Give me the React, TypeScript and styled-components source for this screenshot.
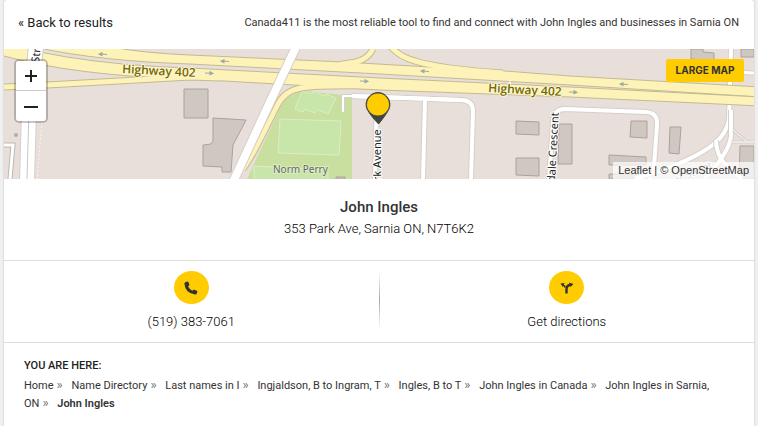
import React from "react";
import styled, { createGlobalStyle } from "styled-components";

const GlobalStyle = createGlobalStyle`
  * { box-sizing: border-box; }
  body {
    margin: 0;
    background: #f0f0f0;
    color: #333;
    font-family: Roboto, "Liberation Sans", sans-serif;
  }
`;

const Card = styled.main`
  margin: 0 4px;
  min-height: 100vh;
  background: #fff;
  border-radius: 3px 3px 0 0;
  box-shadow: 0 0 2px rgba(0, 0, 0, 0.25);
`;

const TopBar = styled.header`
  display: flex;
  align-items: center;
  justify-content: space-between;
  padding: 11px 15px 14px 14px;
  line-height: 24px;
`;

const BackLink = styled.a`
  color: #222;
  font-size: 13px;
  text-decoration: none;
`;

const Tagline = styled.p`
  margin: 0;
  font-size: 11px;
  line-height: 20px;
`;

const MapPanel = styled.section`
  position: relative;
  height: 130px;
  overflow: hidden;
  background: #e8dfda;
`;

const MapDrawing = styled.svg`
  display: block;
  width: 100%;
  height: 100%;
`;

const ZoomControl = styled.div`
  position: absolute;
  top: 10px;
  left: 10px;
  display: flex;
  flex-direction: column;
  border: 2px solid rgba(0, 0, 0, 0.22);
  border-radius: 5px;
  background-clip: padding-box;
`;

const ZoomButton = styled.button<{ $first?: boolean }>`
  display: grid;
  place-items: center;
  width: 30px;
  height: 30px;
  padding: 0;
  border: 0;
  border-bottom: ${(p) => (p.$first ? "1px solid #ccc" : "0")};
  border-radius: ${(p) => (p.$first ? "3px 3px 0 0" : "0 0 3px 3px")};
  background: #fff;
  color: #222;
`;

const LargeMapButton = styled.button`
  position: absolute;
  top: 10px;
  right: 10px;
  width: 78px;
  height: 23px;
  padding: 0 0 2px;
  border: 0;
  border-radius: 2px;
  background: #fc0;
  color: #333;
  font-family: Inter, sans-serif;
  font-size: 10px;
  font-weight: 700;
`;

const Attribution = styled.div`
  position: absolute;
  right: 0;
  bottom: 0;
  padding: 0 5px;
  background: rgba(255, 255, 255, 0.7);
  color: #333;
  font-family: "Liberation Sans", sans-serif;
  font-size: 11px;
  line-height: 17px;

  a { color: inherit; text-decoration: none; }
`;

const Person = styled.section`
  padding: 17px 16px 21px;
  text-align: center;
`;

const Name = styled.h1`
  margin: 0;
  font-size: 15px;
  font-weight: 500;
  line-height: 22px;
`;

const Address = styled.p`
  margin: 0;
  color: #000;
  font-size: 13px;
  font-weight: 300;
  line-height: 21px;
`;

const Actions = styled.nav`
  display: grid;
  grid-template-columns: 1fr 1px 1fr;
  border: solid #ddd;
  border-width: 1px 0;
`;

const Divider = styled.span`
  margin: 10px 0 12px;
  background: linear-gradient(#fff, #aaa, #fff);
`;

const Action = styled.a`
  display: flex;
  flex-direction: column;
  align-items: center;
  gap: 8px;
  padding: 10px 0 11px;
  color: #000;
  font-size: 13px;
  font-weight: 300;
  line-height: 19px;
  text-decoration: none;
`;

const Disc = styled.span`
  display: grid;
  place-items: center;
  width: 35px;
  height: 33px;
  border-radius: 50%;
  background: #fc0;
`;

const Crumbs = styled.nav`
  padding: 14px 20px 12px;
  font-size: 11px;
  line-height: 18px;
`;

const CrumbsTitle = styled.h2`
  margin: 0 0 2px;
  font-size: 11px;
  font-weight: 500;
  line-height: 18px;
  color: #222;
`;

const CrumbLink = styled.a`
  color: #333;
  text-decoration: none;
`;

const Separator = styled.span`
  margin: 0 6px 0 3px;
  color: #777;
  font-size: 13px;
  line-height: 1;
`;

const Current = styled.span`
  font-weight: 600;
`;

const crumbs = [
  "Home",
  "Name Directory",
  "Last names in I",
  "Ingjaldson, B to Ingram, T",
  "Ingles, B to T",
  "John Ingles in Canada",
  "John Ingles in Sarnia, ON",
];

const Road = ({ d, w, fill = "#fff", edge = "#d5cfcb" }: { d: string; w: number; fill?: string; edge?: string }) => (
  <g fill="none" strokeLinejoin="round">
    <path d={d} stroke={edge} strokeWidth={w + 2} />
    <path d={d} stroke={fill} strokeWidth={w} />
  </g>
);

const Arrow = ({ x, y, back }: { x: number; y: number; back?: boolean }) => (
  <path
    d={back ? "M8 0H1M3-1.500L0 0L3 1.500Z" : "M0 0H7M5-1.500L8 0L5 1.500Z"}
    transform={`translate(${x} ${y}) rotate(3)`}
    stroke="#9aabaa"
    fill="#8ba0a0"
    strokeWidth="1"
  />
);

const StreetMap = () => (
  <MapDrawing viewBox="4 49 750 130" preserveAspectRatio="xMidYMid slice" role="img" aria-label="Map around 353 Park Ave">
    <rect x="4" y="49" width="750" height="130" fill="#e8dfda" />
    <path d="M247 179L280 108Q288 92 306 91L352 96V179Z" fill="#c9dfa0" />
    <g fill="#c8e6aa" stroke="#d9efc4">
      <path d="M302 91L312 94L314 91L324 96L326 94L336 98L328 114L318 110L315 113L305 109L303 112L295 109Z" />
      <path d="M280 119L341 121L339 155L278 153Z" />
      <path d="M254 179V166L328 170V179" />
    </g>
    <g fill="#cfc7c1" stroke="#aca29c">
      <path d="M184 89H208V118H184ZM213 118L246 120L233 145L231 172H222V167L203 166V145L211 144L213 141Z" />
      <path d="M516 121L539 122V135L516 134ZM516 158L539 158V176L516 175Z" />
      <path d="M559 124H572V164H558ZM631 121H647V138L630 137ZM670 127H681L679 154L669 153ZM609 155L646 157V165H609ZM609 174H646V179H609ZM691 49H703V52L714 53V61L691 59ZM741 49H754V57H741ZM740 146H754V179H739Z" />
      <path d="M336 177H345V179H336Z" />
    </g>
    <path d="M4 145H13L10 179" fill="none" stroke="#bdb7b3" strokeWidth="5" />
    <path d="M4 145H13L10 179" fill="none" stroke="#fff" strokeWidth="3" />
    <path d="M42 122L37 179" stroke="#f7f2ee" strokeDasharray="2 2" />
    <circle cx="16" cy="135" r="2" fill="#b5aba5" />

    <Road d="M343 112V96H355" w={2} />
    <Road d="M352 96L460 100Q473 100 473 111L471 179" w={4} />
    <Road d="M425 99L423 179M377 98L375 179" w={4} />
    <path d="M352 96L460 100" stroke="#fff" strokeWidth="4" fill="none" />
    <Road d="M549 179L553 123Q553 109 565 109L646 112Q658 113 657 125L654 166L650 179" w={4} />
    <Road d="M731 49L729 120Q726 134 715 143Q700 156 665 169L635 179" w={4} />
    <Road d="M731 110V136Q730 148 715 167L704 179M716 140Q716 154 725 164L742 179" w={4} />
    <Road d="M731 72L754 73" w={3} />
    <Road d="M733 130L746 141M731 142H754" w={1} />

    <g stroke="#c3bb90" strokeWidth="7" fill="none">
      <path d="M373 49Q368 59 356 62L343 64L333 67" />
      <path d="M391 47Q400 57 415 61Q442 69 503 73" />
      <path d="M243 169Q252 156 260 140L277 106Q284 91 301 88Q318 85 380 86" />
      <path d="M4 87L47 85L190 77L220 78" />
    </g>
    <g fill="#fdf2b8" stroke="#c3bb90">
      <path d="M39 48L117 48Q145 53 190 55L343 62L447 68L505 71L570 76L760 87V97L570 85L380 74L190 64Q100 61 39 48Z" />
      <path d="M0 48H24Q60 58 123 64Q155 67 190 68L380 78L570 87L760 97V106L570 97L380 90L190 79Q75 76 0 55Z" />
    </g>
    <g stroke="#fdf2b8" strokeWidth="5" fill="none">
      <path d="M373 49Q368 59 356 62L343 64L333 67" />
      <path d="M391 47Q400 57 415 61Q442 69 503 73" />
      <path d="M243 169Q252 156 260 140L277 106Q284 91 301 88Q318 85 380 86" />
      <path d="M4 87L47 85L190 77L220 78" />
    </g>

    <Road d="M297 45L270 102L233 182" w={8} />
    <Road d="M36 47L29 110L27 182" w={14} />
    <path d="M36 49L29 110L27 179" stroke="#c8c8cc" fill="none" />
    <path d="M510 80V88" stroke="#fff" />
    <Arrow x={99} y={54} back />
    <Arrow x={221} y={61} back />
    <Arrow x={205} y={73} />
    <Arrow x={360} y={81} />
    <Arrow x={421} y={71} back />
    <Arrow x={620} y={84} back />
    <Arrow x={569} y={92} />

    <g fontFamily="Noto Sans, sans-serif" fontSize="12" stroke="#fff" strokeWidth="2" strokeLinejoin="round" paintOrder="stroke" fill="#222">
      <g fontFamily="Open Sans, sans-serif" fontWeight="600" fill="#736900" stroke="#fef6d5">
        <text x="122" y="73" transform="rotate(3 122 73)">Highway 402</text>
        <text x="488" y="92" transform="rotate(3 488 92)">Highway 402</text>
      </g>
      <text x="273" y="173" fontSize="10" fill="#666" stroke="#dcedc5">Norm Perry</text>
      <text transform="translate(381 194) rotate(-90)" fontSize="11">Park Avenue</text>
      <text transform="translate(554 202) rotate(-87)" fontSize="11">Kendale Crescent</text>
      <text transform="translate(39 63) rotate(-84)" fontSize="11">Street</text>
      <text transform="translate(676 184) rotate(-24)" fontSize="10" fill="#888">er Street</text>
    </g>

    <path d="M378 92.500A12 12 0 0 0 367 109Q370 115 378.500 124Q386 115 389 109A12 12 0 0 0 378 92.500Z" fill="#444" stroke="#444" />
    <circle cx="378" cy="104.500" r="11" fill="#fc0" />
  </MapDrawing>
);

export default function App() {
  return (
    <>
      <GlobalStyle />
      <Card>
        <TopBar>
          <BackLink href="#results">« Back to results</BackLink>
          <Tagline>Canada411 is the most reliable tool to find and connect with John Ingles and businesses in Sarnia ON</Tagline>
        </TopBar>

        <MapPanel>
          <StreetMap />
          <ZoomControl>
            <ZoomButton $first aria-label="Zoom in">
              <svg width="14" height="14" viewBox="0 0 14 14" stroke="currentColor" strokeWidth="2"><path d="M1 7H13M7 1V13" /></svg>
            </ZoomButton>
            <ZoomButton aria-label="Zoom out">
              <svg width="14" height="14" viewBox="0 0 14 14" stroke="currentColor" strokeWidth="2"><path d="M0 8H14" /></svg>
            </ZoomButton>
          </ZoomControl>
          <LargeMapButton>LARGE MAP</LargeMapButton>
          <Attribution>
            <a href="#leaflet">Leaflet</a> | © <a href="#osm">OpenStreetMap</a>
          </Attribution>
        </MapPanel>

        <Person>
          <Name>John Ingles</Name>
          <Address>353 Park Ave, Sarnia ON, N7T6K2</Address>
        </Person>

        <Actions aria-label="Contact">
          <Action href="tel:5193837061">
            <Disc>
              <svg width="14" height="14" viewBox="0 0 14 14" fill="#333">
                <path d="M1 1.500L3 .5Q4 .2 4.500 1.200L5.300 3.500Q5.500 4.300 4.900 4.700L4.100 5.400Q5.500 8.300 8.300 9.800L9.200 9Q9.700 8.500 10.400 8.800L12.800 9.800Q13.700 10.300 13.300 11.200L12.500 12.900Q12 13.600 11 13.500Q1.300 12.200.4 2.700Q.3 1.900 1 1.500Z" />
              </svg>
            </Disc>
            (519) 383-7061
          </Action>
          <Divider />
          <Action href="#directions">
            <Disc>
              <svg width="14" height="14" viewBox="0 0 14 14">
                <path d="M6.500 12.500V8.500Q6.500 4.500 10 4" fill="none" stroke="#333" strokeWidth="2.400" />
                <path d="M5.300 6.500Q5 5 3 4" fill="none" stroke="#333" strokeWidth="1.800" />
                <path d="M9 1.500L13.500 3L10.500 6ZM.5 2.500L4.500 2L2.800 6Z" fill="#333" />
              </svg>
            </Disc>
            Get directions
          </Action>
        </Actions>

        <Crumbs aria-label="Breadcrumb">
          <CrumbsTitle>YOU ARE HERE:</CrumbsTitle>
          {crumbs.map((label) => (
            <React.Fragment key={label}>
              <CrumbLink href="#crumb">{label}</CrumbLink>
              <Separator>»</Separator>{" "}
            </React.Fragment>
          ))}
          <Current>John Ingles</Current>
        </Crumbs>
      </Card>
    </>
  );
}
